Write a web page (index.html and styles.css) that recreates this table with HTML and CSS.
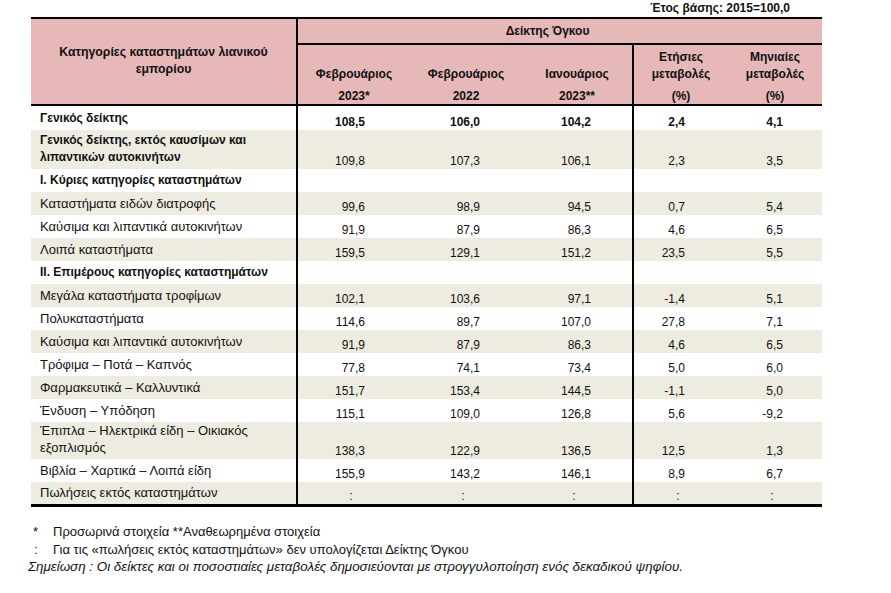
FILE: index.html
```html
<!DOCTYPE html>
<html lang="el">
<head>
<meta charset="utf-8">
<title>Δείκτης Όγκου Λιανικού Εμπορίου</title>
<link rel="stylesheet" href="styles.css">
</head>
<body>
<div class="page">
  <div class="base-row"><span class="base">Έτος βάσης: 2015=100,0</span></div>
  <table class="data">
    <colgroup>
      <col class="c-cat">
      <col class="c-m">
      <col class="c-m">
      <col class="c-m">
      <col class="c-p">
      <col class="c-p">
    </colgroup>
    <thead>
      <tr class="h-a">
        <th rowspan="3" class="cat-h">Κατηγορίες καταστημάτων λιανικού<br>εμπορίου</th>
        <th colspan="5" class="idx-h">Δείκτης Όγκου</th>
      </tr>
      <tr class="h-b1">
        <th>Φεβρουάριος</th>
        <th>Φεβρουάριος</th>
        <th class="sep">Ιανουάριος</th>
        <th>Ετήσιες<br>μεταβολές</th>
        <th>Μηνιαίες<br>μεταβολές</th>
      </tr>
      <tr class="h-b2">
        <th>2023*</th>
        <th>2022</th>
        <th class="sep">2023**</th>
        <th>(%)</th>
        <th>(%)</th>
      </tr>
    </thead>
    <tbody>
      <tr class="r1 bold">
        <td class="lbl bl">Γενικός δείκτης</td>
        <td class="n2">108,5</td><td class="n3">106,0</td><td class="n4 sep">104,2</td><td class="n5">2,4</td><td class="n6">4,1</td>
      </tr>
      <tr class="r2 shade">
        <td class="lbl bl">Γενικός δείκτης, εκτός καυσίμων και<br>λιπαντικών αυτοκινήτων</td>
        <td class="n2">109,8</td><td class="n3">107,3</td><td class="n4 sep">106,1</td><td class="n5">2,3</td><td class="n6">3,5</td>
      </tr>
      <tr>
        <td class="lbl bl">I. Κύριες κατηγορίες καταστημάτων</td>
        <td></td><td></td><td class="sep"></td><td></td><td></td>
      </tr>
      <tr class="shade">
        <td class="lbl">Καταστήματα ειδών διατροφής</td>
        <td class="n2">99,6</td><td class="n3">98,9</td><td class="n4 sep">94,5</td><td class="n5">0,7</td><td class="n6">5,4</td>
      </tr>
      <tr>
        <td class="lbl">Καύσιμα και λιπαντικά αυτοκινήτων</td>
        <td class="n2">91,9</td><td class="n3">87,9</td><td class="n4 sep">86,3</td><td class="n5">4,6</td><td class="n6">6,5</td>
      </tr>
      <tr class="shade">
        <td class="lbl">Λοιπά καταστήματα</td>
        <td class="n2">159,5</td><td class="n3">129,1</td><td class="n4 sep">151,2</td><td class="n5">23,5</td><td class="n6">5,5</td>
      </tr>
      <tr>
        <td class="lbl bl">II. Επιμέρους κατηγορίες καταστημάτων</td>
        <td></td><td></td><td class="sep"></td><td></td><td></td>
      </tr>
      <tr class="shade">
        <td class="lbl">Μεγάλα καταστήματα τροφίμων</td>
        <td class="n2">102,1</td><td class="n3">103,6</td><td class="n4 sep">97,1</td><td class="n5">-1,4</td><td class="n6">5,1</td>
      </tr>
      <tr>
        <td class="lbl">Πολυκαταστήματα</td>
        <td class="n2">114,6</td><td class="n3">89,7</td><td class="n4 sep">107,0</td><td class="n5">27,8</td><td class="n6">7,1</td>
      </tr>
      <tr class="shade">
        <td class="lbl">Καύσιμα και λιπαντικά αυτοκινήτων</td>
        <td class="n2">91,9</td><td class="n3">87,9</td><td class="n4 sep">86,3</td><td class="n5">4,6</td><td class="n6">6,5</td>
      </tr>
      <tr>
        <td class="lbl">Τρόφιμα – Ποτά – Καπνός</td>
        <td class="n2">77,8</td><td class="n3">74,1</td><td class="n4 sep">73,4</td><td class="n5">5,0</td><td class="n6">6,0</td>
      </tr>
      <tr class="shade">
        <td class="lbl">Φαρμακευτικά – Καλλυντικά</td>
        <td class="n2">151,7</td><td class="n3">153,4</td><td class="n4 sep">144,5</td><td class="n5">-1,1</td><td class="n6">5,0</td>
      </tr>
      <tr>
        <td class="lbl">Ένδυση – Υπόδηση</td>
        <td class="n2">115,1</td><td class="n3">109,0</td><td class="n4 sep">126,8</td><td class="n5">5,6</td><td class="n6">-9,2</td>
      </tr>
      <tr class="r3 shade">
        <td class="lbl">Έπιπλα – Ηλεκτρικά είδη – Οικιακός<br>εξοπλισμός</td>
        <td class="n2">138,3</td><td class="n3">122,9</td><td class="n4 sep">136,5</td><td class="n5">12,5</td><td class="n6">1,3</td>
      </tr>
      <tr>
        <td class="lbl">Βιβλία – Χαρτικά – Λοιπά είδη</td>
        <td class="n2">155,9</td><td class="n3">143,2</td><td class="n4 sep">146,1</td><td class="n5">8,9</td><td class="n6">6,7</td>
      </tr>
      <tr class="shade last">
        <td class="lbl">Πωλήσεις εκτός καταστημάτων</td>
        <td class="na">:</td><td class="na">:</td><td class="na sep">:</td><td class="na">:</td><td class="na">:</td>
      </tr>
    </tbody>
  </table>
  <div class="notes">
    <div class="note"><span class="mark">*</span><span>Προσωρινά στοιχεία **Αναθεωρημένα στοιχεία</span></div>
    <div class="note"><span class="mark colon">:</span><span>Για τις «πωλήσεις εκτός καταστημάτων» δεν υπολογίζεται Δείκτης Όγκου</span></div>
    <div class="note italic">Σημείωση : Οι δείκτες και οι ποσοστιαίες μεταβολές δημοσιεύονται με στρογγυλοποίηση ενός δεκαδικού ψηφίου.</div>
  </div>
</div>
</body>
</html>
```

FILE: styles.css
```css
html, body {
  margin: 0;
  padding: 0;
  background: #ffffff;
}

body {
  font-family: "Liberation Sans", Arial, sans-serif;
  font-size: 12px;
  color: #111111;
}

.page {
  padding-left: 31px;
  width: 791px;
}

.base-row {
  display: flex;
  justify-content: flex-end;
  height: 17px;
  line-height: 17px;
  padding-right: 32px;
}

.base {
  font-weight: bold;
}

.data {
  border-collapse: separate;
  border-spacing: 0;
  table-layout: fixed;
  width: 791px;
  border-top: 2px solid #000;
}

.c-cat { width: 267px; }
.c-m { width: 112px; }
.c-p { width: 94px; }

thead th {
  background: #e6b8b7;
  font-weight: bold;
  padding: 0;
  text-align: center;
}

.h-a { height: 26px; }
.h-b1 { height: 38px; }
.h-b2 { height: 23px; }

.cat-h {
  border-right: 2px solid #000;
  border-bottom: 2px solid #000;
  vertical-align: middle;
  line-height: 17px;
  font-size: 12.3px;
  padding-bottom: 2px;
}

.idx-h {
  border-bottom: 2px solid #000;
  vertical-align: middle;
  line-height: 17px;
  padding-right: 25px;
}

.h-b1 th {
  vertical-align: bottom;
  line-height: 17px;
}

.h-b2 th {
  vertical-align: bottom;
  line-height: 14px;
  border-bottom: 2px solid #000;
  padding-bottom: 1px;
}

.sep {
  border-right: 2px solid #000;
}

tbody td {
  padding: 0;
  vertical-align: bottom;
  line-height: 16px;
  white-space: nowrap;
}

tbody tr { height: 23px; }
tbody tr.r1 { height: 24px; }
tbody tr.r2 { height: 39px; }
tbody tr.r3 { height: 35px; }
tbody tr.last { height: 25px; }

.shade td { background: #eeece1; }

.bold { font-weight: bold; }

.lbl {
  border-right: 2px solid #000;
  padding-left: 9px;
  padding-bottom: 3px;
  line-height: 17px;
  font-size: 13px;
}

.lbl.bl {
  font-weight: bold;
  font-size: 12px;
}

.n2, .n3, .n4, .n5, .n6 { text-align: right; }
.n2 { padding-right: 45px; }
.n3 { padding-right: 42px; }
.n4 { padding-right: 41px; }
.n5 { padding-right: 43px; }
.n6 { padding-right: 39px; }

.na {
  text-align: center;
  padding-right: 6px;
}

.last td { border-bottom: 3px solid #000; }

.notes {
  padding-top: 16px;
  line-height: 17.5px;
  font-size: 13px;
}

.note {
  display: flex;
}

.mark {
  width: 22px;
  padding-left: 2px;
  box-sizing: border-box;
  flex: none;
}

.mark.colon {
  padding-left: 3px;
}

.italic {
  font-style: italic;
  font-size: 13.4px;
  margin-left: -3px;
}
```
